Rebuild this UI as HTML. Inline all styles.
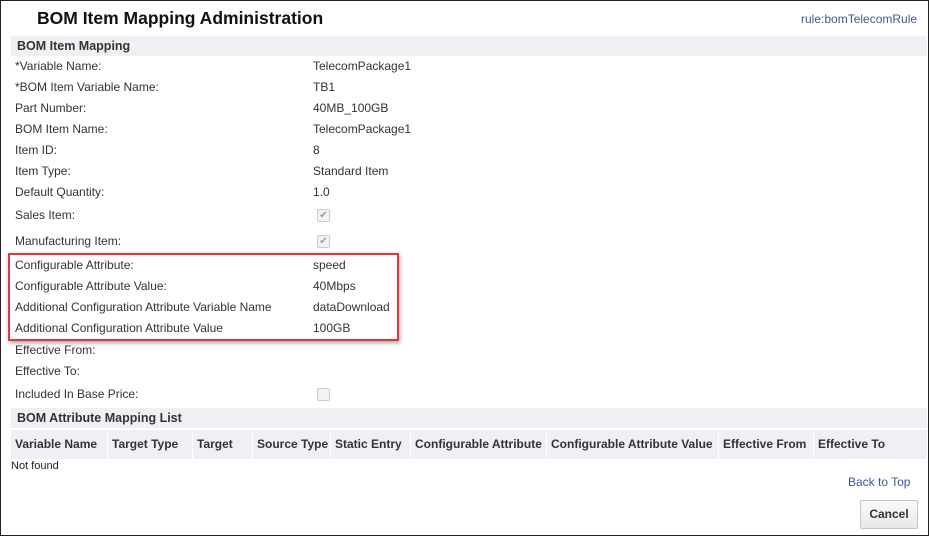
<!DOCTYPE html>
<html><head><style>
body{margin:0;width:929px;height:536px;position:relative;font-family:"Liberation Sans",sans-serif;font-size:12px;color:#333;background:#fff;overflow:hidden}
.frame{position:absolute;left:0;top:0;width:927px;height:534px;border:1px solid #222}
.a{position:absolute;white-space:nowrap}
.lab{left:15px}
.val{left:313px}
.sec{position:absolute;left:11px;width:916px;background:#eef0f3;font-weight:bold;color:#333;font-size:12.5px}
.cb{position:absolute;left:317px;width:11px;height:11px;border:1px solid #ccc;background:#f2f2f2;border-radius:2px;font-size:10px;color:#999;line-height:11px;text-align:center}
.th{position:absolute;top:430px;height:29px;background:#eef0f3;font-weight:bold;line-height:29px;padding-left:4px;box-sizing:border-box;font-size:12px;white-space:nowrap;overflow:hidden}
</style></head><body>
<div class="frame"></div>
<div class="a" style="left:37px;top:8px;font-size:17.5px;font-weight:bold;color:#111">BOM Item Mapping Administration</div>
<div class="a" style="left:801px;top:12px;color:#3c5a9a">rule:bomTelecomRule</div>
<div class="sec" style="top:36px;height:20px;line-height:20px;padding-left:6px;box-sizing:border-box">BOM Item Mapping</div>
<div class="a lab" style="top:59px">*Variable Name:</div><div class="a val" style="top:59px">TelecomPackage1</div>
<div class="a lab" style="top:80px">*BOM Item Variable Name:</div><div class="a val" style="top:80px">TB1</div>
<div class="a lab" style="top:101px">Part Number:</div><div class="a val" style="top:101px">40MB_100GB</div>
<div class="a lab" style="top:122px">BOM Item Name:</div><div class="a val" style="top:122px">TelecomPackage1</div>
<div class="a lab" style="top:143px">Item ID:</div><div class="a val" style="top:143px">8</div>
<div class="a lab" style="top:164px">Item Type:</div><div class="a val" style="top:164px">Standard Item</div>
<div class="a lab" style="top:185px">Default Quantity:</div><div class="a val" style="top:185px">1.0</div>
<div class="a lab" style="top:208px">Sales Item:</div><div class="cb" style="top:209px">✔</div>
<div class="a lab" style="top:234px">Manufacturing Item:</div><div class="cb" style="top:235px">✔</div>
<div class="a lab" style="top:258px">Configurable Attribute:</div><div class="a val" style="top:258px">speed</div>
<div class="a lab" style="top:279px">Configurable Attribute Value:</div><div class="a val" style="top:279px">40Mbps</div>
<div class="a lab" style="top:300px">Additional Configuration Attribute Variable Name</div><div class="a val" style="top:300px">dataDownload</div>
<div class="a lab" style="top:321px">Additional Configuration Attribute Value</div><div class="a val" style="top:321px">100GB</div>
<div style="position:absolute;left:8px;top:253px;width:387px;height:84px;border:2px solid #e8353c;box-shadow:1px 2px 4px rgba(0,0,0,.35)"></div>
<div class="a lab" style="top:343px">Effective From:</div>
<div class="a lab" style="top:364px">Effective To:</div>
<div class="a lab" style="top:387px">Included In Base Price:</div><div class="cb" style="top:388px"></div>
<div class="sec" style="top:408px;height:20px;line-height:20px;padding-left:6px;box-sizing:border-box">BOM Attribute Mapping List</div>
<div class="th" style="left:11px;width:96px">Variable Name</div>
<div class="th" style="left:108px;width:84px">Target Type</div>
<div class="th" style="left:193px;width:59px">Target</div>
<div class="th" style="left:253px;width:77px">Source Type</div>
<div class="th" style="left:331px;width:79px">Static Entry</div>
<div class="th" style="left:411px;width:135px">Configurable Attribute</div>
<div class="th" style="left:547px;width:171px">Configurable Attribute Value</div>
<div class="th" style="left:719px;width:94px">Effective From</div>
<div class="th" style="left:814px;width:113px">Effective To</div>
<div class="a" style="left:11px;top:460px;font-size:11px;color:#222">Not found</div>
<div class="a" style="left:848px;top:475px;color:#3c5a9a">Back to Top</div>
<div style="position:absolute;left:860px;top:500px;width:56px;height:27px;border:1px solid #c4c4c4;border-radius:2px;background:linear-gradient(#fafafa,#e8e8e8);font-weight:bold;line-height:27px;text-align:center;color:#333">Cancel</div>
</body></html>
